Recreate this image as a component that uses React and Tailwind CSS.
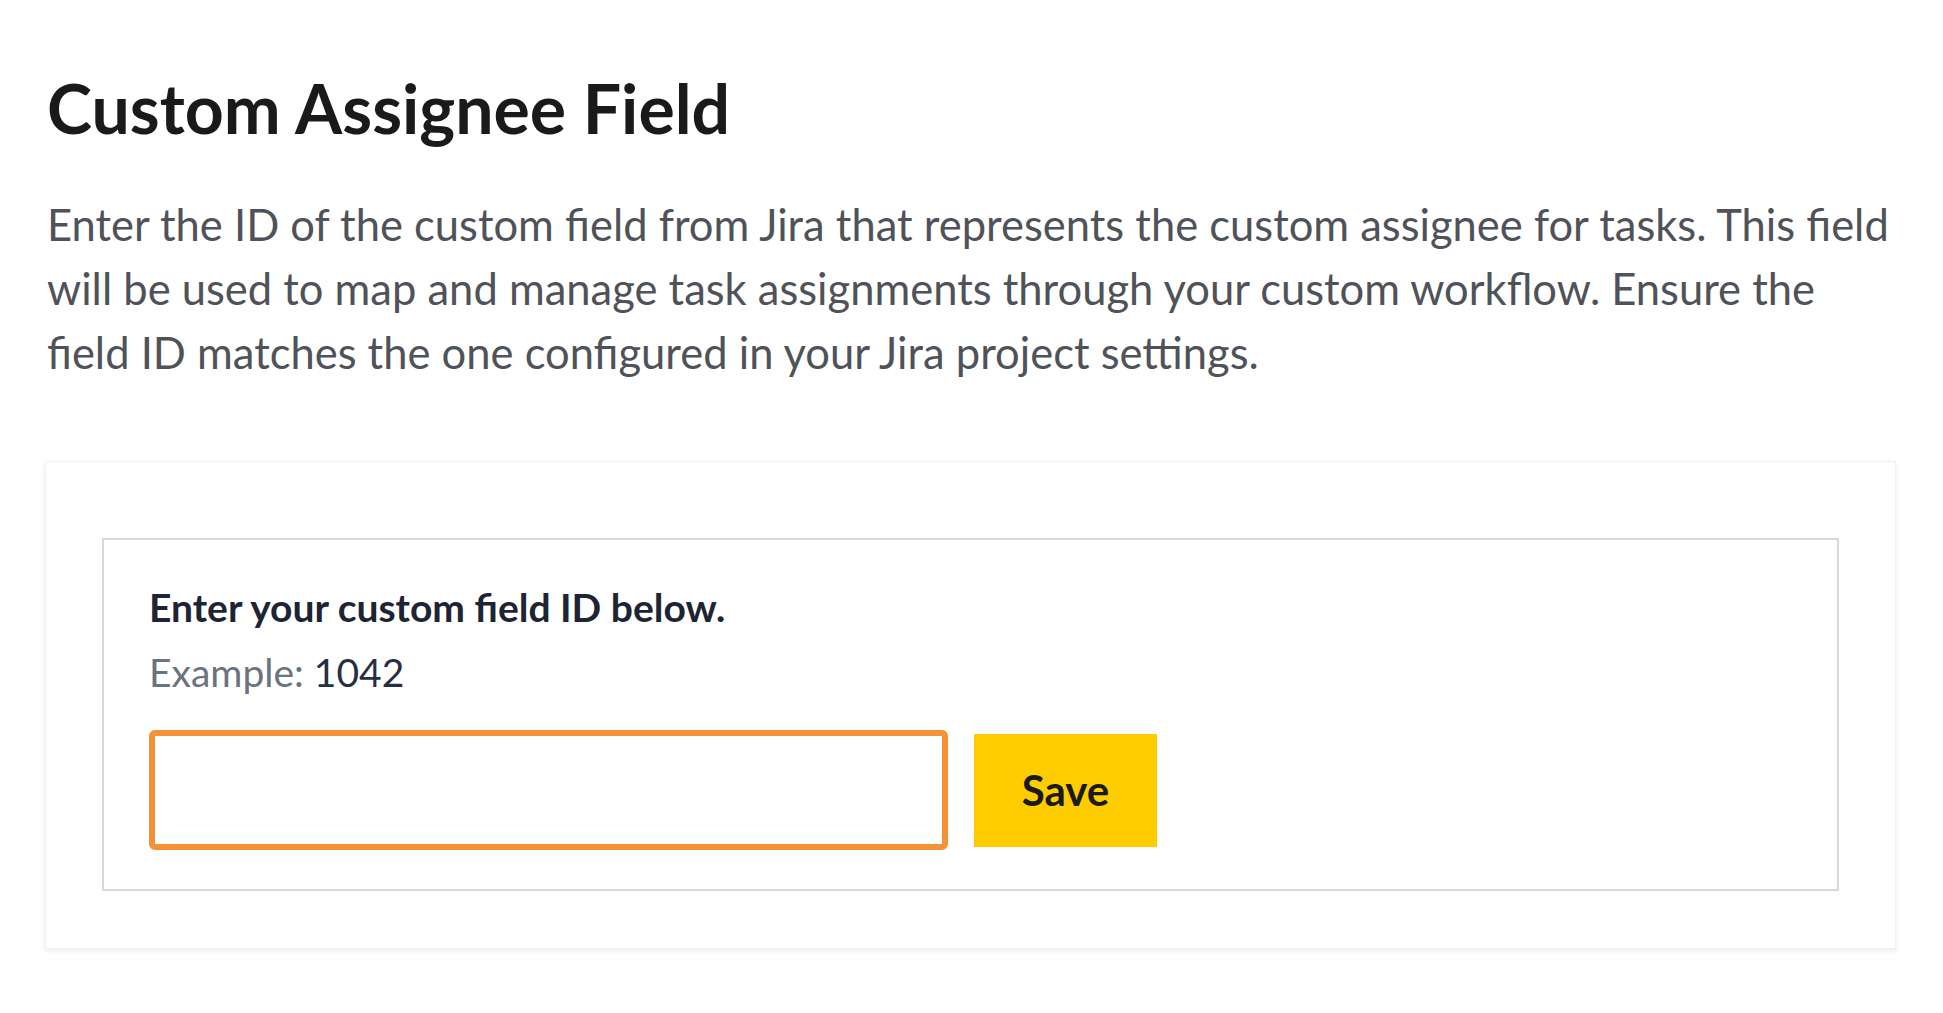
import React, { useState } from "react";

const font = { fontFamily: "Lato, 'Noto Sans', sans-serif" };

export default function App() {
  const [fieldId, setFieldId] = useState("");

  return (
    <div className="min-h-screen bg-white" style={font}>
      <div className="pl-[47px] pr-[40px] pt-[70px]">
        {/* TITULO */}
        <h1 className="text-[68px] leading-[76px] font-bold text-[#1a1a1a]">
          Custom Assignee Field
        </h1>

        {/* DESCRIPCION */}
        <p className="mt-[46px] text-[43.5px] leading-[64px] text-[#505259]">
          Enter the ID of the custom field from Jira that represents the custom
          assignee for tasks. This field will be used to map and manage task
          assignments through your custom workflow. Ensure the field ID matches
          the one configured in your Jira project settings.
        </p>

        {/* TARJETA */}
        <div className="mt-[77px] ml-[-2px] w-[1851px] bg-white border border-[#f1f1f3] shadow-[0_2px_6px_rgba(0,0,0,0.08)] pt-[76px] px-[56px] pb-[57px]">
          <div className="border-2 border-[#d6d9df] pt-[42px] pl-[45px] pr-[45px] pb-[39px]">
            <p className="text-[39px] leading-[50px] font-bold text-[#1d2433]">
              Enter your custom field ID below.
            </p>
            <p className="mt-[15px] text-[39px] leading-[50px]">
              <span className="text-[#6b7280]">Example: </span>
              <span className="text-[#253044]">1042</span>
            </p>

            <div className="mt-[33px] flex items-center gap-[26px]">
              <input
                type="text"
                value={fieldId}
                onChange={(e) => setFieldId(e.target.value)}
                className="w-[799px] h-[120px] border-[6px] border-[#f39237] rounded-[6px] px-4 text-[39px] outline-none"
              />
              <button className="w-[183px] h-[113px] bg-[#ffcc00] text-[#1a1a1a] text-[42px] font-bold">
                Save
              </button>
            </div>
          </div>
        </div>
      </div>
    </div>
  );
}
